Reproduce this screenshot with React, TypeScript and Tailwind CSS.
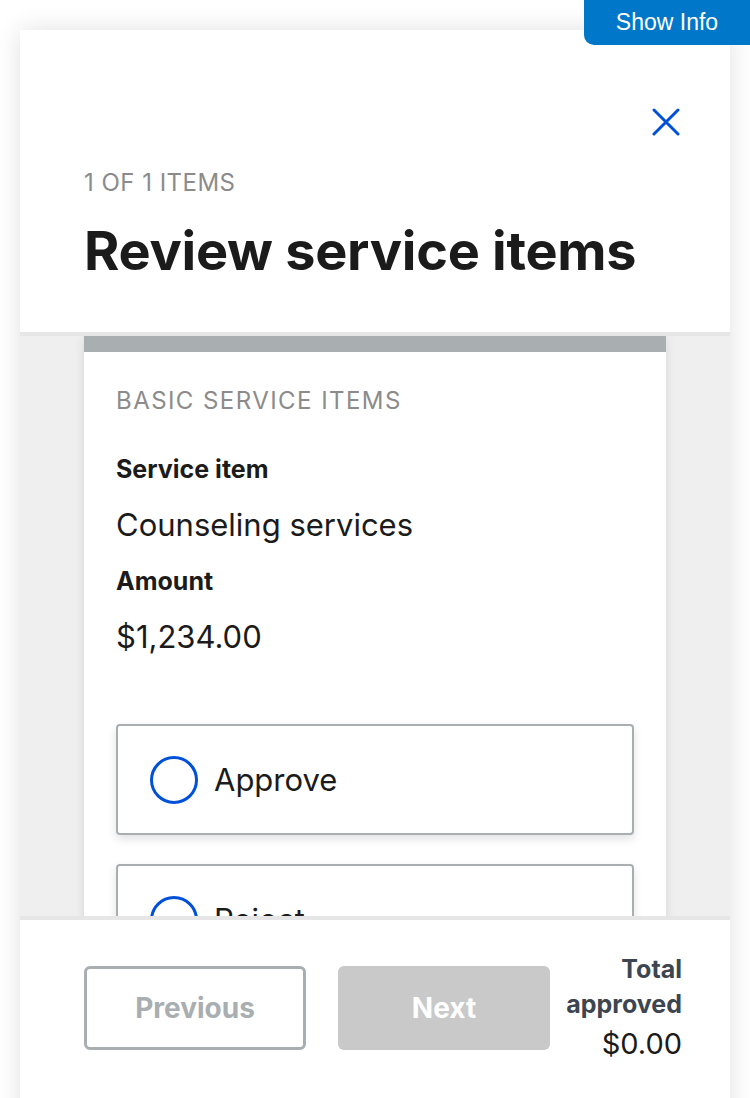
import React from 'react';

const font = { fontFamily: 'Inter, "Liberation Sans", sans-serif' };

const Radio: React.FC<{ label: string }> = ({ label }) => (
  <label className="flex items-center h-[111px] px-8 border-2 border-[#a9aeb1] rounded-[4px] bg-white shadow-[0_4px_10px_rgba(0,0,0,0.12)] shrink-0">
    <span className="w-[48px] h-[48px] rounded-full border-[3px] border-[#0050d8] shrink-0" />
    <span className="ml-4 text-[31px] leading-[40px] text-[#1b1b1b]">{label}</span>
  </label>
);

const App: React.FC = () => {
  return (
    <div className="relative w-[750px] h-[1098px] bg-white overflow-hidden" style={font}>
      <button className="absolute top-0 right-0 z-20 w-[166px] h-[45px] bg-[#0077c8] rounded-bl-[10px] text-white text-[23px]" style={{ fontFamily: '"Liberation Sans", Arial, sans-serif' }}>
        Show Info
      </button>

      <div className="absolute left-[20px] top-[30px] w-[710px] h-[1100px] flex flex-col bg-white shadow-[0_0_24px_rgba(0,0,0,0.12)]">
        {/* header */}
        <div className="relative h-[306px] shrink-0 px-[64px] border-b-4 border-[#e6e6e6]">
          <button className="absolute right-[50px] top-[78px] w-[28px] h-[28px] text-[#0050d8]">
            <svg viewBox="0 0 28 28" className="w-full h-full" fill="none" stroke="currentColor" strokeWidth="3" strokeLinecap="round">
              <path d="M2 2 L26 26 M26 2 L2 26" />
            </svg>
          </button>
          <p className="pt-[138px] text-[24px] leading-[30px] tracking-[0.02em] text-[#8b8b8b] uppercase">1 of 1 items</p>
          <h1 className="mt-[21px] text-[54px] leading-[64px] font-bold text-[#1b1b1b] tracking-[-0.005em]">Review service items</h1>
        </div>

        {/* scroll area */}
        <div className="h-[580px] shrink-0 bg-[#efefef] overflow-hidden px-[64px]">
          <div className="bg-white border-t-[16px] border-[#a9aeb1] shadow-[0_2px_10px_rgba(0,0,0,0.1)] px-8 pt-[34px] pb-10">
            <p className="text-[24px] leading-[30px] tracking-[0.06em] text-[#8b8b8b] uppercase">Basic service items</p>
            <p className="mt-[38px] text-[25px] leading-[30px] font-bold text-[#1b1b1b]">Service item</p>
            <p className="mt-[21px] text-[31px] leading-[40px] text-[#1b1b1b]">Counseling services</p>
            <p className="mt-[21px] text-[25px] leading-[30px] font-bold text-[#1b1b1b]">Amount</p>
            <p className="mt-[21px] text-[31px] leading-[40px] text-[#1b1b1b]">$1,234.00</p>
            <div className="mt-[67px] flex flex-col gap-[29px]">
              <Radio label="Approve" />
              <Radio label="Reject" />
            </div>
          </div>
        </div>

        {/* footer */}
        <div className="shrink-0 border-t-4 border-[#e6e6e6] flex items-start pl-[64px] pr-[48px]">
          <button className="mt-[46px] w-[222px] h-[84px] border-[3px] border-[#a9aeb1] rounded-[6px] text-[28px] font-bold text-[#a9aeb1]">Previous</button>
          <button className="mt-[46px] ml-[32px] w-[212px] h-[84px] bg-[#c9c9c9] rounded-[6px] text-[28px] font-bold text-white">Next</button>
          <div className="mt-[32px] ml-auto text-right">
            <p className="text-[25px] leading-[35px] font-bold text-[#3d4551]">Total<br />approved</p>
            <p className="text-[29px] leading-[44px] text-[#1b1b1b]">$0.00</p>
          </div>
        </div>
      </div>
    </div>
  );
};

export default App;
